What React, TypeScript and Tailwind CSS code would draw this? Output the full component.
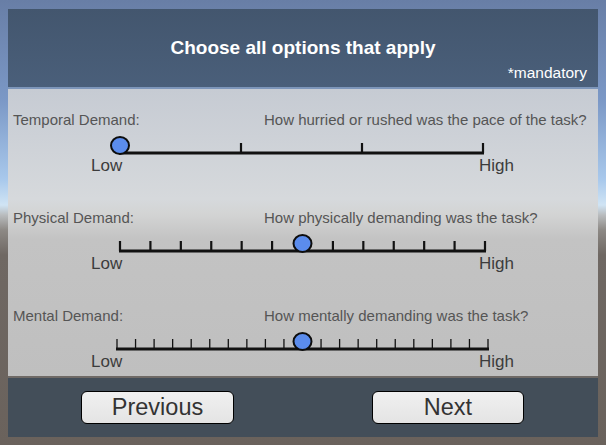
import React from 'react'

type SliderProps = {
  from: number
  to: number
  steps: number
  value: number
  thin?: boolean
}

function Scale({ from, to, steps, value, thin }: SliderProps) {
  const ticks = []
  for (let i = 0; i <= steps; i++) {
    ticks.push(from + ((to - from) * i) / steps)
  }
  const knobX = from + ((to - from) * value) / steps
  return (
    <svg width="590" height="28" viewBox="8 0 590 28" className="block">
      {ticks.map((x, i) => (
        <line
          key={i}
          x1={x}
          x2={x}
          y1={15}
          y2={25}
          stroke="#111"
          strokeWidth={thin ? 1.3 : 2.2}
        />
      ))}
      <line x1={from - 1} x2={to + 1} y1={25} y2={25} stroke="#111" strokeWidth={3} />
      <ellipse cx={knobX} cy={17.5} rx={9} ry={8.6} fill="#5b8cec" stroke="#0d0d0d" strokeWidth={2} />
    </svg>
  )
}

const rows = [
  {
    label: 'Temporal Demand:',
    question: 'How hurried or rushed was the pace of the task?',
    scale: { from: 120, to: 483, steps: 3, value: 0 },
  },
  {
    label: 'Physical Demand:',
    question: 'How physically demanding was the task?',
    scale: { from: 120, to: 485, steps: 12, value: 6 },
  },
  {
    label: 'Mental Demand:',
    question: 'How mentally demanding was the task?',
    scale: { from: 117, to: 488, steps: 20, value: 10, thin: true },
  },
]

export default function App() {
  return (
    <div
      className="w-[606px] h-[445px] overflow-hidden pt-[9px] pl-[8px] bg-[linear-gradient(to_bottom,#687ea6_0px,#7b98c6_100px,#a9c9ec_180px,#d0e4f4_205px,#b9bcbe_215px,#8d8985_230px,#6f6863_255px,#6a625c_445px)]"
      style={{ fontFamily: '"Liberation Sans", Arial, sans-serif' }}
    >
      <div className="w-[590px] flex flex-col">
        <div className="h-[78px] bg-[linear-gradient(to_bottom,#43566e,#4a5f7a)] flex flex-col items-center">
          <div className="pt-[28px] text-[19px] font-bold text-white leading-[22px]">
            Choose all options that apply
          </div>
          <div className="self-end pr-[11px] pt-[5px] text-[15.5px] text-white leading-[18px]">
            *mandatory
          </div>
        </div>
        <div className="h-[2px] bg-[#7d96ba]" />
        <div className="h-[287px] pt-[22px] flex flex-col gap-[34px] bg-[linear-gradient(to_bottom,#c6cbd3_0px,#d6d9dc_110px,#d3d4d4_125px,#c3c3c3_150px,#bfbfbf_287px)]">
          {rows.map((r) => (
            <div key={r.label} className="flex flex-col">
              <div className="flex h-[17px] pl-[5px] text-[15px] leading-[17px] text-[#555]">
                <span className="w-[251px]">{r.label}</span>
                <span>{r.question}</span>
              </div>
              <Scale {...r.scale} />
              <div className="flex justify-between pl-[83px] pr-[84px] pt-[1px] text-[17px] leading-[18px] text-[#3c3c3c]">
                <span>Low</span>
                <span>High</span>
              </div>
            </div>
          ))}
        </div>
        <div className="h-[2px] bg-[#6f6a66]" />
        <div className="h-[59px] bg-[#434e59] flex pt-[13px] pl-[73px] gap-[138px]">
          <button className="w-[153px] h-[33px] rounded-[6px] border-[1.5px] border-black bg-[linear-gradient(to_bottom,#f0f0f0,#e4e4e4)] text-[23.5px] leading-none text-[#333]">
            Previous
          </button>
          <button className="w-[152px] h-[33px] rounded-[6px] border-[1.5px] border-black bg-[linear-gradient(to_bottom,#f0f0f0,#e4e4e4)] text-[23.5px] leading-none text-[#333]">
            Next
          </button>
        </div>
      </div>
    </div>
  )
}
